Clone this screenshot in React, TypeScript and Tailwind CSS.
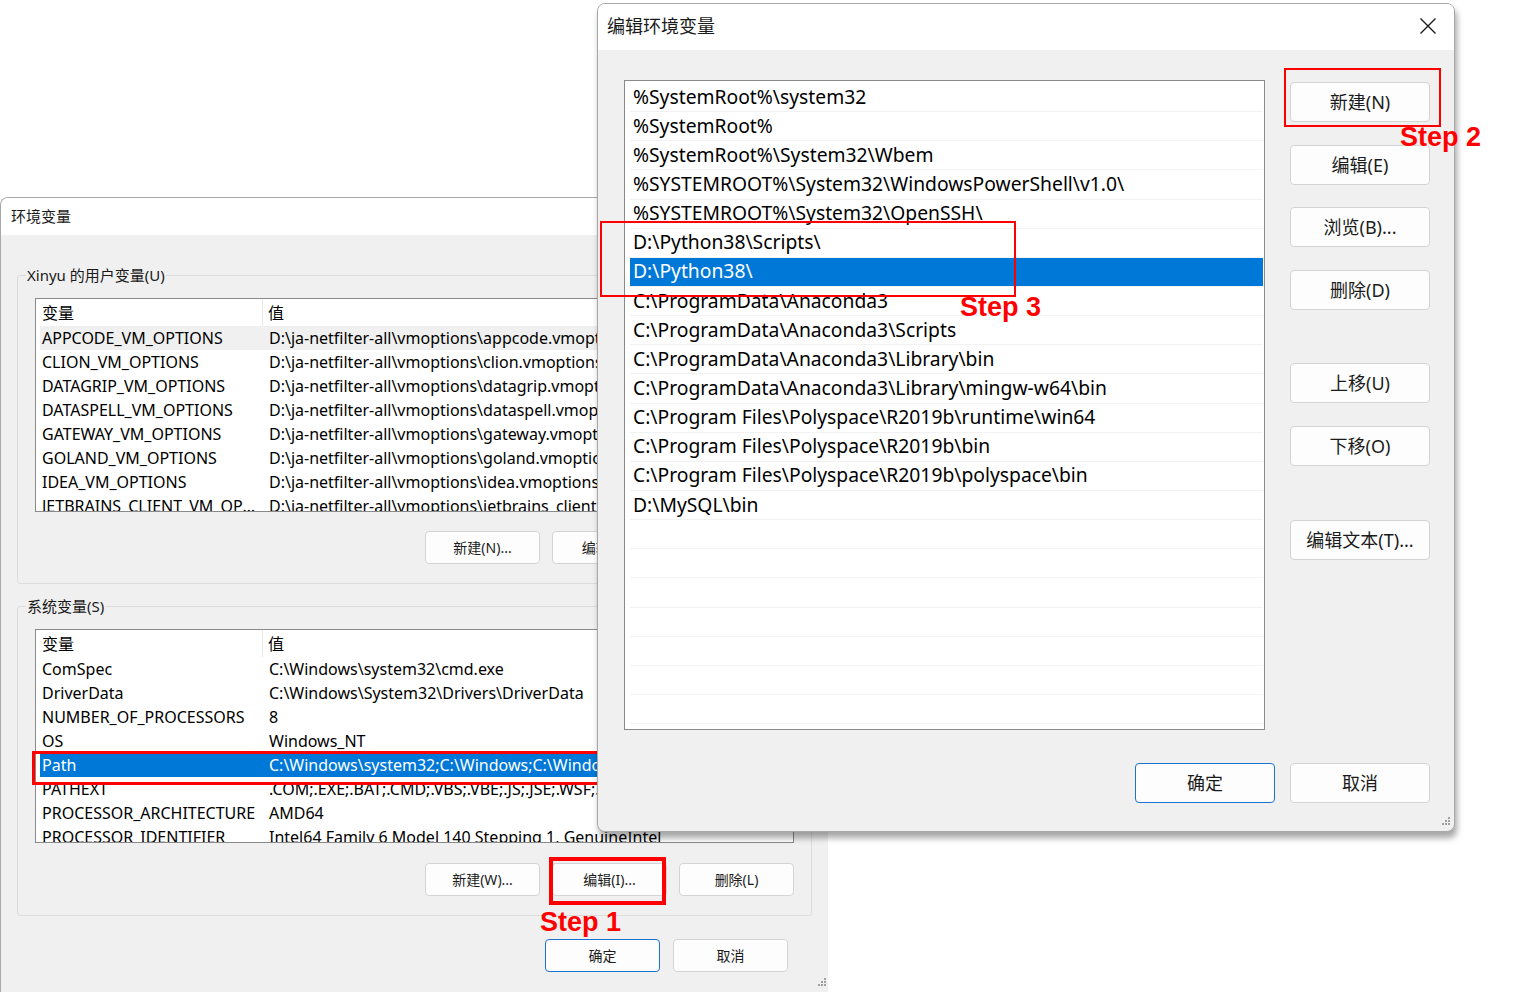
import React from 'react';

const userVars: [string, string][] = [
  ['APPCODE_VM_OPTIONS', 'D:\\ja-netfilter-all\\vmoptions\\appcode.vmoptions'],
  ['CLION_VM_OPTIONS', 'D:\\ja-netfilter-all\\vmoptions\\clion.vmoptions'],
  ['DATAGRIP_VM_OPTIONS', 'D:\\ja-netfilter-all\\vmoptions\\datagrip.vmoptions'],
  ['DATASPELL_VM_OPTIONS', 'D:\\ja-netfilter-all\\vmoptions\\dataspell.vmoptions'],
  ['GATEWAY_VM_OPTIONS', 'D:\\ja-netfilter-all\\vmoptions\\gateway.vmoptions'],
  ['GOLAND_VM_OPTIONS', 'D:\\ja-netfilter-all\\vmoptions\\goland.vmoptions'],
  ['IDEA_VM_OPTIONS', 'D:\\ja-netfilter-all\\vmoptions\\idea.vmoptions'],
  ['JETBRAINS_CLIENT_VM_OPTIONS', 'D:\\ja-netfilter-all\\vmoptions\\jetbrains_client.vmoptions'],
];

const sysVars: [string, string][] = [
  ['ComSpec', 'C:\\Windows\\system32\\cmd.exe'],
  ['DriverData', 'C:\\Windows\\System32\\Drivers\\DriverData'],
  ['NUMBER_OF_PROCESSORS', '8'],
  ['OS', 'Windows_NT'],
  ['Path', 'C:\\Windows\\system32;C:\\Windows;C:\\Windows\\System32\\Wbem;'],
  ['PATHEXT', '.COM;.EXE;.BAT;.CMD;.VBS;.VBE;.JS;.JSE;.WSF;.WSH;.MSC'],
  ['PROCESSOR_ARCHITECTURE', 'AMD64'],
  ['PROCESSOR_IDENTIFIER', 'Intel64 Family 6 Model 140 Stepping 1, GenuineIntel'],
];

const paths = [
  '%SystemRoot%\\system32',
  '%SystemRoot%',
  '%SystemRoot%\\System32\\Wbem',
  '%SYSTEMROOT%\\System32\\WindowsPowerShell\\v1.0\\',
  '%SYSTEMROOT%\\System32\\OpenSSH\\',
  'D:\\Python38\\Scripts\\',
  'D:\\Python38\\',
  'C:\\ProgramData\\Anaconda3',
  'C:\\ProgramData\\Anaconda3\\Scripts',
  'C:\\ProgramData\\Anaconda3\\Library\\bin',
  'C:\\ProgramData\\Anaconda3\\Library\\mingw-w64\\bin',
  'C:\\Program Files\\Polyspace\\R2019b\\runtime\\win64',
  'C:\\Program Files\\Polyspace\\R2019b\\bin',
  'C:\\Program Files\\Polyspace\\R2019b\\polyspace\\bin',
  'D:\\MySQL\\bin',
  '', '', '', '', '', '', '', '',
];

const Grip = () => (
  <svg width="12" height="12" viewBox="0 0 12 12">
    {[[9, 1], [6, 4], [9, 4], [3, 7], [6, 7], [9, 7]].map(([x, y], i) => (
      <rect key={i} x={x} y={y} width="2" height="2" fill="#a0a0a0" />
    ))}
  </svg>
);

function SmallBtn({ children, primary }: { children: React.ReactNode; primary?: boolean }) {
  return (
    <div
      className={`w-[115px] h-[33px] rounded-[4px] flex items-center justify-center text-[14px] text-[#1b1b1b] bg-[#fdfdfd] border ${
        primary ? 'border-[#1a73d1]' : 'border-[#d4d4d4]'
      }`}
    >
      {children}
    </div>
  );
}

function BigBtn({ children, primary, className = '' }: { children: React.ReactNode; primary?: boolean; className?: string }) {
  return (
    <div
      className={`w-[140px] h-[40px] rounded-[4px] flex items-center justify-center text-[18px] text-[#1b1b1b] bg-[#fdfdfd] border ${
        primary ? 'border-[#1a73d1]' : 'border-[#d4d4d4]'
      } ${className}`}
    >
      {children}
    </div>
  );
}

function GroupBox({ label, children }: { label: string; children: React.ReactNode }) {
  return (
    <div className="border border-[#dcdcdc] rounded-[3px] px-[17px] pb-[19px]">
      <div className="-mt-[11px] -ml-[9px] w-fit bg-[#f0f0f0] px-[1px] text-[15px] leading-[20px] text-[#1a1a1a]">{label}</div>
      {children}
    </div>
  );
}

function VarList({ rows, hover, selected }: { rows: [string, string][]; hover?: number; selected?: number }) {
  return (
    <div className="mt-[13px] h-[214px] border border-[#8a8a8a] bg-white overflow-hidden text-[16px] text-black">
      <div className="h-[27px] flex items-center whitespace-nowrap">
        <div className="w-[227px] h-full pl-[6px] flex items-center border-r border-[#e8e8e8]">变量</div>
        <div className="pl-[5px]">值</div>
      </div>
      {rows.map(([n, v], i) => (
        <div
          key={n}
          className={`h-[24px] ml-[4px] flex items-center whitespace-nowrap ${
            i === selected ? 'bg-[#0078d7] text-white' : i === hover ? 'bg-[#f0f0f0]' : ''
          }`}
        >
          <div className="w-[223px] pl-[2px] pr-[6px] shrink-0 overflow-hidden text-ellipsis">{n}</div>
          <div className="pl-[6px]">{v}</div>
        </div>
      ))}
    </div>
  );
}

export default function App() {
  return (
    <div className="relative w-[1516px] h-[992px] bg-white overflow-hidden font-['Noto_Sans','Noto_Sans_CJK_SC',sans-serif]">
      {/* 环境变量 dialog */}
      <div className="absolute left-0 top-[197px] w-[828px] h-[800px] bg-[#f0f0f0] rounded-tl-[8px] border-l border-t border-[#a8a8a8] overflow-hidden flex flex-col">
        <div className="h-[37px] shrink-0 bg-white flex items-center pl-[10px] text-[15px] text-[#1a1a1a]">环境变量</div>
        <div className="flex flex-col pl-[16px] pr-[16px] pt-[40px]">
          <GroupBox label="Xinyu 的用户变量(U)">
            <VarList rows={userVars} hover={0} />
            <div className="mt-[19px] flex justify-end gap-[12px]">
              <SmallBtn>新建(N)...</SmallBtn>
              <SmallBtn>编辑(E)...</SmallBtn>
              <SmallBtn>删除(D)</SmallBtn>
            </div>
          </GroupBox>
          <div className="h-[22px]" />
          <GroupBox label="系统变量(S)">
            <div className="relative">
              <VarList rows={sysVars} selected={4} />
              {/* Path highlight box */}
              <div className="absolute left-[-3px] top-[122px] w-[600px] h-[34px] border-[3px] border-[#ff0000]" />
            </div>
            <div className="mt-[20px] flex justify-end gap-[12px]">
              <SmallBtn>新建(W)...</SmallBtn>
              <SmallBtn>编辑(I)...</SmallBtn>
              <SmallBtn>删除(L)</SmallBtn>
            </div>
          </GroupBox>
          <div className="mt-[23px] pr-[24px] flex justify-end gap-[13px]">
            <SmallBtn primary>确定</SmallBtn>
            <SmallBtn>取消</SmallBtn>
          </div>
        </div>
        <div className="absolute left-[814px] top-[779px]">
          <Grip />
        </div>
      </div>

      {/* 编辑环境变量 dialog */}
      <div className="absolute left-[597px] top-[3px] w-[858px] h-[829px] rounded-[8px] border border-[#a8a8a8] bg-[#f0f0f0] overflow-hidden shadow-[2px_6px_6px_rgba(0,0,0,0.35)] flex flex-col">
        <div className="h-[46px] shrink-0 bg-white flex items-center justify-between pl-[9px] pr-[17px]">
          <span className="text-[18px] leading-[24px] -mt-[3px] text-[#1a1a1a]">编辑环境变量</span>
          <svg width="18" height="18" viewBox="0 0 18 18" className="-mt-[3px]">
            <path d="M1.5 1.5 L16.5 16.5 M16.5 1.5 L1.5 16.5" stroke="#1a1a1a" strokeWidth="1.4" fill="none" />
          </svg>
        </div>
        <div className="flex pl-[26px] pt-[30px]">
          <div className="w-[641px] h-[650px] border border-[#8a8a8a] bg-white overflow-hidden pt-[2px] text-[19.3px] text-black">
            {paths.map((p, i) => (
              <div
                key={i}
                className={`h-[29.15px] ml-[5px] mr-[1px] pl-[3px] flex items-center whitespace-nowrap border-b border-[#f2f2f2] ${
                  i === 6 ? 'bg-[#0078d7] text-white' : ''
                }`}
              >
                {p}
              </div>
            ))}
          </div>
          <div className="ml-[25px] flex flex-col">
            <BigBtn className="mt-[2px]">新建(N)</BigBtn>
            <BigBtn className="mt-[23px]">编辑(E)</BigBtn>
            <BigBtn className="mt-[22px]">浏览(B)...</BigBtn>
            <BigBtn className="mt-[23px]">删除(D)</BigBtn>
            <BigBtn className="mt-[53px]">上移(U)</BigBtn>
            <BigBtn className="mt-[23px]">下移(O)</BigBtn>
            <BigBtn className="mt-[54px]">编辑文本(T)...</BigBtn>
          </div>
        </div>
        <div className="mt-[33px] pr-[24px] flex justify-end gap-[15px]">
          <BigBtn primary>确定</BigBtn>
          <BigBtn>取消</BigBtn>
        </div>
        <div className="absolute right-[3px] bottom-[3px]">
          <Grip />
        </div>
      </div>

      {/* annotations */}
      <div className="absolute left-[549px] top-[857px] w-[117px] h-[48px] border-[4px] border-[#ff0000]" />
      <div className="absolute left-[540px] top-[904px] text-[27px] font-bold leading-[36px] text-[#ff0000] font-['Liberation_Sans',sans-serif]">Step 1</div>
      <div className="absolute left-[1284px] top-[68px] w-[157px] h-[59px] border-[2px] border-[#ff0000]" />
      <div className="absolute left-[1400px] top-[119px] text-[27px] font-bold leading-[36px] text-[#ff0000] font-['Liberation_Sans',sans-serif]">Step 2</div>
      <div className="absolute left-[600px] top-[221px] w-[416px] h-[76px] border-[2px] border-[#ff0000]" />
      <div className="absolute left-[960px] top-[289px] text-[27px] font-bold leading-[36px] text-[#ff0000] font-['Liberation_Sans',sans-serif]">Step 3</div>
    </div>
  );
}
